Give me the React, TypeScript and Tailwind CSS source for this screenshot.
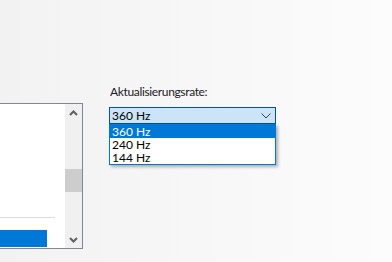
import React from "react";

const rates = ["360 Hz", "240 Hz", "144 Hz"];

function ScrollArrow({ down }: { down?: boolean }) {
  return (
    <div className="h-[17px] flex items-center justify-center">
      <svg width="9" height="6" viewBox="0 0 9 6">
        <polyline
          points={down ? "1,1 4.5,4.5 8,1" : "1,5 4.5,1.5 8,5"}
          fill="none"
          stroke="#606060"
          strokeWidth="2"
        />
      </svg>
    </div>
  );
}

export default function App() {
  return (
    <div className="w-[392px] h-[262px] flex bg-gradient-to-r from-[#f2f2f2] to-[#fcfcfc] font-['Segoe_UI','Lato',sans-serif] text-[12px] leading-[13px] text-black overflow-hidden">
      {/* list box, cut off on the left */}
      <div className="mt-[103px] w-[83px] h-[146px] flex bg-white border-y border-r border-[#828790]">
        <div className="w-[65px] flex flex-col">
          <div className="mt-[113px] w-[55px] h-px bg-[#d9dcee]" />
          <div className="mt-[12px] w-[47px] h-[17px] bg-[#0078d7]" />
        </div>
        <div className="w-[17px] bg-[#f0f0f0] flex flex-col">
          <ScrollArrow />
          <div className="mt-[48px] h-[23px] bg-[#cdcdcd]" />
          <div className="flex-1" />
          <ScrollArrow down />
        </div>
      </div>

      {/* refresh rate picker */}
      <div className="ml-[26px] mt-[85px] w-[167px] flex flex-col">
        <div className="h-[15px] pl-[1px] text-[#1a1a1a] tracking-[-0.35px]">Aktualisierungsrate:</div>
        <div className="mt-[7px] h-[17px] flex items-center justify-between pl-[2px] pr-[4px] bg-[#cce4f7] border border-[#005499]">
          <span>360 Hz</span>
          <svg width="10" height="6" viewBox="0 0 10 6">
            <polyline points="0.5,0.5 5,5 9.5,0.5" fill="none" stroke="#404040" strokeWidth="1" />
          </svg>
        </div>
        <div className="border border-[#0078d7] bg-white shadow-[2px_2px_3px_rgba(0,0,0,0.3)]">
          {rates.map((r, i) => (
            <div
              key={r}
              className={
                i === 0
                  ? "h-[13px] pl-[2px] bg-[#0078d7] text-white"
                  : "h-[13px] pl-[2px]"
              }
            >
              {r}
            </div>
          ))}
        </div>
      </div>
    </div>
  );
}
